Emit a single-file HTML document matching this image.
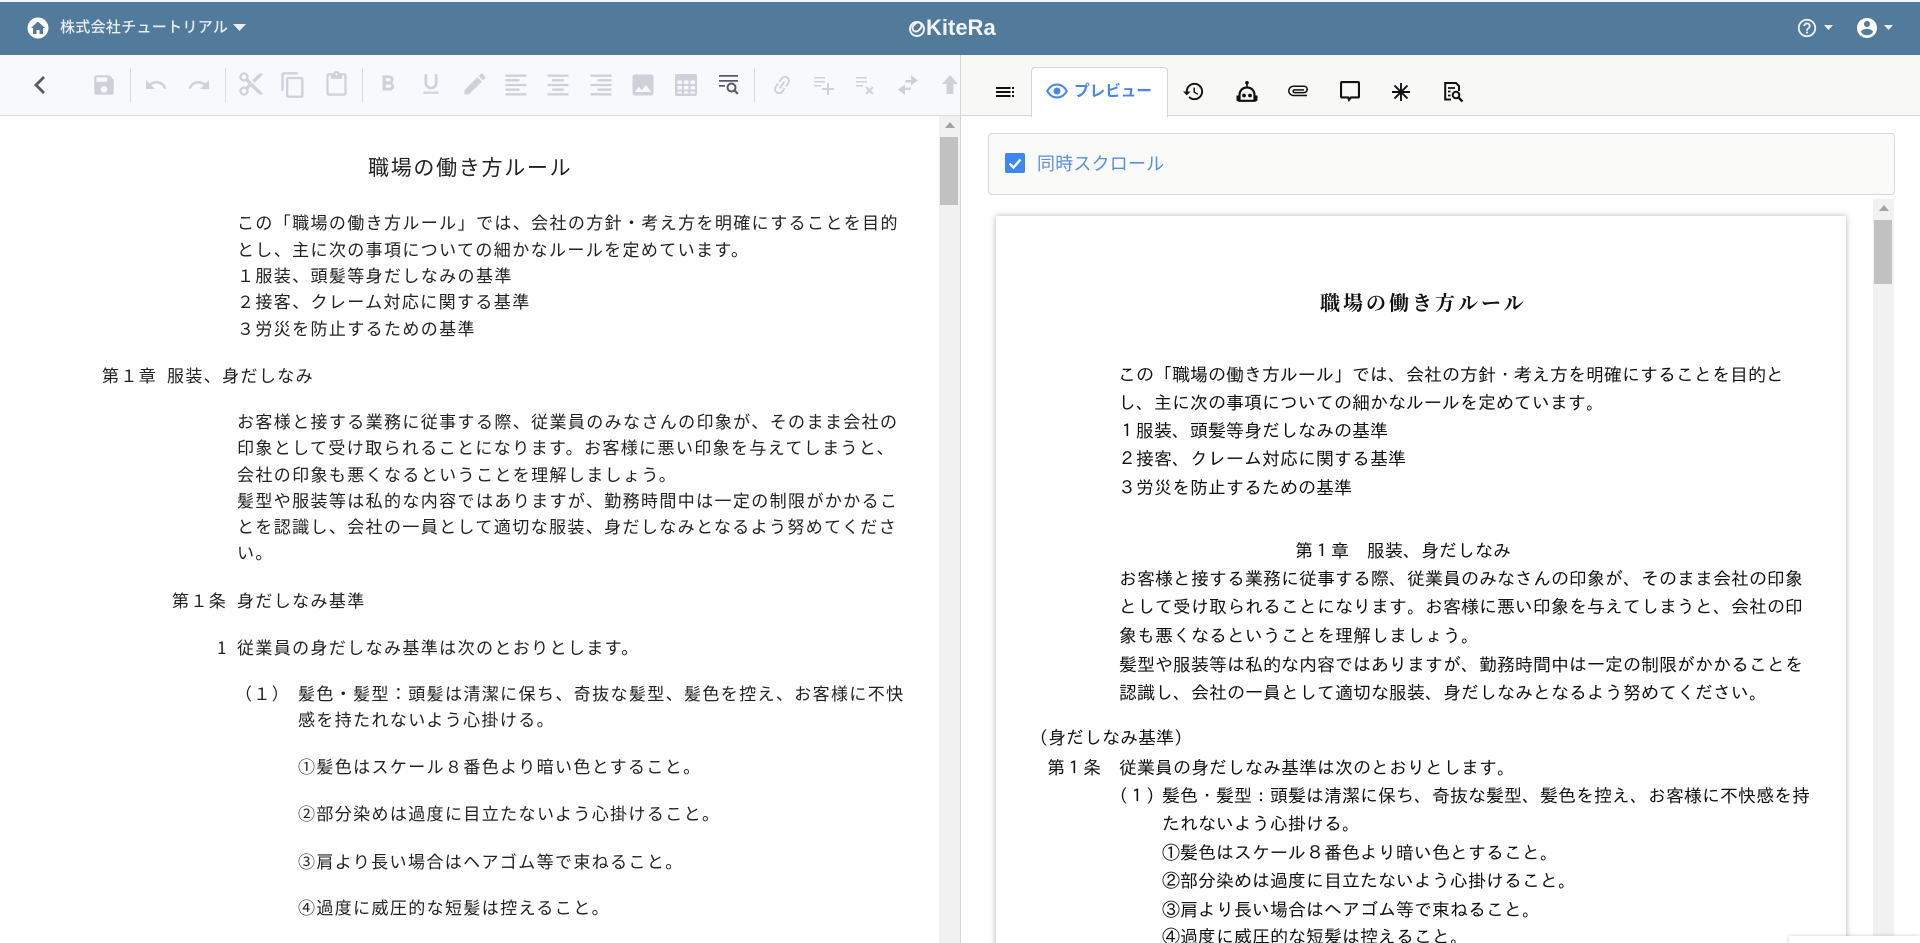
<!DOCTYPE html>
<html lang="ja"><head><meta charset="utf-8"><title>KiteRa</title>
<style>
html,body{margin:0;padding:0;width:1920px;height:943px;overflow:hidden;background:#fff}
body{position:relative;font-family:"Liberation Sans","Noto Sans CJK JP",sans-serif}
div,span,svg{position:absolute}
svg{display:block}
.l,.r{white-space:nowrap;line-height:20px;height:20px}
.l{font-family:"Noto Sans CJK JP",sans-serif;font-size:17px;letter-spacing:1.380px;color:#222;font-weight:400}
.r{font-family:"IPAGothic","Noto Sans CJK JP",sans-serif;font-size:18px;color:#111;line-height:22px;height:22px}
.g{fill:#ced1d9}
.k{fill:#111}
</style></head><body>
<!-- header -->
<div style="left:0;top:0;width:1920px;height:2px;background:#f4f6f8"></div>
<div style="left:0;top:2px;width:1920px;height:53px;background:#527a9b"></div>
<svg style="left:27px;top:17px" width="22" height="22" viewBox="0 0 22 22"><circle cx="11" cy="11" r="10.500" fill="#fff"/><path d="M11 4.500L4 11h2v6h3.500v-4h3v4H16v-6h2z" fill="#527a9b"/></svg>
<span style="left:60px;top:17px;line-height:20px;font-size:15px;letter-spacing:.3px;color:#e8eef3;white-space:nowrap;font-weight:500;font-family:'Noto Sans CJK JP',sans-serif">株式会社チュートリアル</span>
<svg style="left:233px;top:24px" width="13" height="8" viewBox="0 0 13 8"><path d="M0 0h13L6.500 7z" fill="#e8eef3"/></svg>
<svg style="left:908px;top:20px" width="18" height="18" viewBox="0 0 18 18" fill="none" stroke="#f2f5f8" stroke-width="1.900"><circle cx="9" cy="9" r="7"/><rect x="4" y="3.500" width="10" height="7" rx="3.500" transform="rotate(-45 9 7)"/></svg>
<span style="left:926px;top:15px;font-size:22px;line-height:26px;font-weight:700;color:#f2f5f8;white-space:nowrap">KiteRa</span>
<svg style="left:1796px;top:17px" width="22" height="22" viewBox="0 0 24 24"><path fill="#eef2f5" d="M11 18h2v-2h-2v2zm1-16C6.480 2 2 6.480 2 12s4.480 10 10 10 10-4.480 10-10S17.520 2 12 2zm0 18c-4.410 0-8-3.590-8-8s3.590-8 8-8 8 3.590 8 8-3.590 8-8 8zm0-14c-2.210 0-4 1.790-4 4h2c0-1.100.9-2 2-2s2 .9 2 2c0 2-3 1.750-3 5h2c0-2.250 3-2.500 3-5 0-2.210-1.790-4-4-4z"/></svg>
<svg style="left:1824px;top:25px" width="9" height="6" viewBox="0 0 9 6"><path d="M0 0h9L4.500 5z" fill="#eef2f5"/></svg>
<svg style="left:1855px;top:16px" width="24" height="24" viewBox="0 0 24 24"><path fill="#fff" d="M12 2C6.480 2 2 6.480 2 12s4.480 10 10 10 10-4.480 10-10S17.520 2 12 2zm0 3c1.660 0 3 1.340 3 3s-1.340 3-3 3-3-1.340-3-3 1.340-3 3-3zm0 14.200c-2.500 0-4.710-1.280-6-3.220.03-1.990 4-3.080 6-3.080 1.990 0 5.970 1.090 6 3.080-1.290 1.940-3.500 3.220-6 3.220z"/></svg>
<svg style="left:1884px;top:25px" width="9" height="6" viewBox="0 0 9 6"><path d="M0 0h9L4.500 5z" fill="#eef2f5"/></svg>

<!-- left toolbar -->
<div style="left:0;top:55px;width:960px;height:60px;background:#f8f9fc"></div>
<div style="left:0;top:115px;width:960px;height:1px;background:#d8dae2"></div>
<div style="left:130px;top:68px;width:1px;height:34px;background:#d8dae0"></div>
<div style="left:225px;top:68px;width:1px;height:34px;background:#d8dae0"></div>
<div style="left:362px;top:68px;width:1px;height:34px;background:#d8dae0"></div>
<div style="left:754px;top:68px;width:1px;height:34px;background:#d8dae0"></div>
<svg style="left:33px;top:75px" width="13" height="20" viewBox="0 0 13 20"><path d="M11 2L3 10l8 8" fill="none" stroke="#555a66" stroke-width="2.800"/></svg>
<svg style="left:91px;top:72px" width="26" height="26" viewBox="0 0 24 24"><path class="g" d="M17 3H5c-1.110 0-2 .9-2 2v14c0 1.100.89 2 2 2h14c1.100 0 2-.9 2-2V7l-4-4zm-5 16c-1.660 0-3-1.340-3-3s1.340-3 3-3 3 1.340 3 3-1.340 3-3 3zm3-10H5V5h10v4z"/></svg>
<svg style="left:144px;top:73px" width="24" height="24" viewBox="0 0 24 24"><path class="g" d="M12.500 8c-2.650 0-5.050.99-6.900 2.600L2 7v9h9l-3.620-3.620c1.390-1.160 3.160-1.880 5.120-1.880 3.540 0 6.550 2.310 7.600 5.500l2.370-.78C21.080 11.030 17.150 8 12.500 8z"/></svg>
<svg style="left:187px;top:73px" width="24" height="24" viewBox="0 0 24 24"><path class="g" d="M18.400 10.600C16.550 8.990 14.150 8 11.500 8c-4.650 0-8.580 3.030-9.960 7.220L3.900 16c1.050-3.190 4.050-5.500 7.600-5.500 1.950 0 3.730.72 5.120 1.880L13 16h9V7l-3.600 3.600z"/></svg>
<svg style="left:237px;top:70px" width="28" height="28" viewBox="0 0 24 24"><path class="g" d="M9.640 7.640c.23-.5.36-1.050.36-1.640 0-2.210-1.790-4-4-4S2 3.790 2 6s1.790 4 4 4c.59 0 1.140-.13 1.640-.36L10 12l-2.360 2.360C7.140 14.130 6.590 14 6 14c-2.210 0-4 1.790-4 4s1.790 4 4 4 4-1.790 4-4c0-.59-.13-1.140-.36-1.640L12 14l7 7h3v-1L9.640 7.640zM6 8c-1.100 0-2-.89-2-2s.9-2 2-2 2 .89 2 2-.9 2-2 2zm0 12c-1.100 0-2-.89-2-2s.9-2 2-2 2 .89 2 2-.9 2-2 2zm6-7.500c-.28 0-.5-.22-.5-.5s.22-.5.5-.5.5.22.5.5-.22.5-.5.5zM19 3l-6 6 2 2 7-7V3z"/></svg>
<svg style="left:279px;top:71px" width="28" height="28" viewBox="0 0 24 24"><path class="g" d="M16 1H4c-1.100 0-2 .9-2 2v14h2V3h12V1zm3 4H8c-1.100 0-2 .9-2 2v14c0 1.100.9 2 2 2h11c1.100 0 2-.9 2-2V7c0-1.100-.9-2-2-2zm0 16H8V7h11v14z"/></svg>
<svg style="left:323px;top:71px" width="27" height="27" viewBox="0 0 24 24"><path class="g" d="M19 2h-4.180C14.400.84 13.300 0 12 0c-1.300 0-2.400.84-2.820 2H5c-1.100 0-2 .9-2 2v16c0 1.100.9 2 2 2h14c1.100 0 2-.9 2-2V4c0-1.100-.9-2-2-2zm-7 0c.55 0 1 .45 1 1s-.45 1-1 1-1-.45-1-1 .45-1 1-1zm7 18H5V4h2v3h10V4h2v16z"/></svg>
<svg style="left:375px;top:71px" width="26" height="26" viewBox="0 0 24 24"><path class="g" d="M15.600 10.790c.97-.67 1.650-1.770 1.650-2.790 0-2.260-1.750-4-4-4H7v14h7.040c2.090 0 3.710-1.700 3.710-3.790 0-1.520-.86-2.820-2.150-3.420zM10 6.500h3c.83 0 1.500.67 1.500 1.500s-.67 1.500-1.500 1.500h-3v-3zm3.500 9H10v-3h3.500c.83 0 1.500.67 1.500 1.500s-.67 1.500-1.500 1.500z"/></svg>
<svg style="left:418px;top:71px" width="26" height="26" viewBox="0 0 24 24"><path class="g" d="M12 17c3.310 0 6-2.690 6-6V3h-2.500v8c0 1.930-1.570 3.500-3.500 3.500S8.500 12.930 8.500 11V3H6v8c0 3.310 2.690 6 6 6zm-7 2v2h14v-2H5z"/></svg>
<svg style="left:461px;top:70px" width="28" height="28" viewBox="0 0 24 24"><path class="g" d="M3 17.250V21h3.750L17.810 9.940l-3.750-3.750L3 17.250zM20.710 7.040c.39-.39.39-1.020 0-1.410l-2.340-2.340c-.39-.39-1.020-.39-1.410 0l-1.830 1.830 3.750 3.750 1.830-1.830z"/></svg>
<svg style="left:502px;top:71px" width="28" height="28" viewBox="0 0 24 24"><path class="g" d="M15 15H3v2h12v-2zm0-8H3v2h12V7zM3 13h18v-2H3v2zm0 8h18v-2H3v2zM3 3v2h18V3H3z"/></svg>
<svg style="left:544px;top:71px" width="28" height="28" viewBox="0 0 24 24"><path class="g" d="M7 15v2h10v-2H7zm-4 6h18v-2H3v2zm0-8h18v-2H3v2zm4-6v2h10V7H7zM3 3v2h18V3H3z"/></svg>
<svg style="left:587px;top:71px" width="28" height="28" viewBox="0 0 24 24"><path class="g" d="M3 21h18v-2H3v2zm6-4h12v-2H9v2zm-6-4h18v-2H3v2zm6-4h12V7H9v2zM3 3v2h18V3H3z"/></svg>
<svg style="left:629px;top:71px" width="28" height="28" viewBox="0 0 24 24"><path class="g" d="M21 19V5c0-1.100-.9-2-2-2H5c-1.100 0-2 .9-2 2v14c0 1.100.9 2 2 2h14c1.100 0 2-.9 2-2zM8.500 13.500l2.500 3.010L14.500 12l4.500 6H5l3.500-4.500z"/></svg>
<svg style="left:675px;top:74px" width="22" height="22" viewBox="0 0 22 22"><path class="g" fill-rule="evenodd" d="M2 0h18a2 2 0 0 1 2 2v18a2 2 0 0 1-2 2H2a2 2 0 0 1-2-2V2a2 2 0 0 1 2-2zM2.500 6.500v3.500h4.500V6.500zm6.500 0v3.500h4.500V6.500zm6.500 0v3.500h4.500V6.500zM2.500 12v3.500h4.500V12zm6.500 0v3.500h4.500V12zm6.500 0v3.500h4.500V12zM2.500 17.500v2h4.500v-2zm6.500 0v2h4.500v-2zm6.500 0v2h4.500v-2z"/></svg>
<svg style="left:718px;top:74px" width="22" height="22" viewBox="0 0 22 22" fill="#555a66"><path d="M1 1h19v1.800H1zM1 6h19v1.800H1zM1 11h6v1.800H1z"/><circle cx="13.500" cy="13.500" r="4" fill="none" stroke="#555a66" stroke-width="2"/><path d="M16 16l3.800 3.800" stroke="#555a66" stroke-width="2.200"/></svg>
<svg style="left:770px;top:73px" width="24" height="24" viewBox="0 0 24 24"><g transform="rotate(-55 12 12)"><path class="g" d="M3.900 12c0-1.710 1.390-3.100 3.100-3.100h4V7H7c-2.760 0-5 2.240-5 5s2.240 5 5 5h4v-1.900H7c-1.710 0-3.100-1.390-3.100-3.100zM8 13h8v-2H8v2zm9-6h-4v1.900h4c1.710 0 3.100 1.390 3.100 3.100s-1.390 3.100-3.100 3.100h-4V17h4c2.760 0 5-2.240 5-5s-2.240-5-5-5z"/></g></svg>
<svg style="left:813px;top:75px" width="22" height="20" viewBox="0 0 22 20"><path class="g" d="M1 2h11v1.500H1zM1 6h11v1.500H1zM1 10h7v1.500H1zM14 8h2v5h5v2h-5v5h-2v-5H9v-2h5z"/></svg>
<svg style="left:855px;top:75px" width="20" height="20" viewBox="0 0 20 20"><path class="g" d="M1 2h11v1.500H1zM1 6h11v1.500H1zM1 10h7v1.500H1z"/><path d="M11 12l7 7M18 12l-7 7" stroke="#ced1d9" stroke-width="2"/></svg>
<svg style="left:897px;top:74px" width="22" height="22" viewBox="0 0 22 22"><path class="g" d="M14 1l7 5.500-7 5V8.500H7.500L9 6h5zM8 21l-7-5.500 7-5v3h6.500L13 16H8z"/></svg>
<svg style="left:941px;top:74px" width="18" height="22" viewBox="0 0 18 22"><path class="g" d="M9 1l8 9h-4.500v10h-7V10H1z"/></svg>

<!-- left content -->
<div style="left:939px;top:116px;width:21px;height:827px;background:#f1f1f1"></div>
<svg style="left:945px;top:122px" width="10" height="6" viewBox="0 0 10 6"><path d="M5 0l5 6H0z" fill="#a3a3a3"/></svg>
<div style="left:940px;top:137px;width:18px;height:68px;background:#c1c1c1"></div>
<span class="l" style="left:368px;top:156px;font-size:21px;letter-spacing:1.700px;line-height:22px;height:22px">職場の働き方ルール</span>
<span class="l" style="left:237px;top:212px">この「職場の働き方ルール」では、会社の方針・考え方を明確にすることを目的</span>
<span class="l" style="left:237px;top:239px">とし、主に次の事項についての細かなルールを定めています。</span>
<span class="l" style="left:237px;top:265px">１服装、頭髪等身だしなみの基準</span>
<span class="l" style="left:237px;top:291px">２接客、クレーム対応に関する基準</span>
<span class="l" style="left:237px;top:318px">３労災を防止するための基準</span>
<span class="l" style="left:102px;top:365px">第１章</span>
<span class="l" style="left:167px;top:365px">服装、身だしなみ</span>
<span class="l" style="left:237px;top:411px">お客様と接する業務に従事する際、従業員のみなさんの印象が、そのまま会社の</span>
<span class="l" style="left:237px;top:437px">印象として受け取られることになります。お客様に悪い印象を与えてしまうと、</span>
<span class="l" style="left:237px;top:464px">会社の印象も悪くなるということを理解しましょう。</span>
<span class="l" style="left:237px;top:490px">髪型や服装等は私的な内容ではありますが、勤務時間中は一定の制限がかかるこ</span>
<span class="l" style="left:237px;top:516px">とを認識し、会社の一員として適切な服装、身だしなみとなるよう努めてくださ</span>
<span class="l" style="left:237px;top:542px">い。</span>
<span class="l" style="left:172px;top:590px">第１条</span>
<span class="l" style="left:237px;top:590px">身だしなみ基準</span>
<span class="l" style="left:217px;top:637px">1</span>
<span class="l" style="left:237px;top:637px">従業員の身だしなみ基準は次のとおりとします。</span>
<span class="l" style="left:235px;top:683px">（１）</span>
<span class="l" style="left:298px;top:683px">髪色・髪型：頭髪は清潔に保ち、奇抜な髪型、髪色を控え、お客様に不快</span>
<span class="l" style="left:298px;top:709px">感を持たれないよう心掛ける。</span>
<span class="l" style="left:298px;top:756px">①髪色はスケール８番色より暗い色とすること。</span>
<span class="l" style="left:298px;top:803px">②部分染めは過度に目立たないよう心掛けること。</span>
<span class="l" style="left:298px;top:851px">③肩より長い場合はヘアゴム等で束ねること。</span>
<span class="l" style="left:298px;top:897px">④過度に威圧的な短髪は控えること。</span>

<!-- divider -->
<div style="left:960px;top:55px;width:1px;height:888px;background:#d4d4d4"></div>

<!-- right tab bar -->
<div style="left:961px;top:55px;width:959px;height:60px;background:#f8f8f6"></div>
<div style="left:961px;top:115px;width:959px;height:1px;background:#d6d6d6"></div>
<div style="left:1031px;top:67px;width:135px;height:49px;background:#fff;border:1px solid #d6d6d6;border-bottom:none;border-radius:4px 4px 0 0"></div>
<svg style="left:996px;top:87px" width="18" height="10" viewBox="0 0 18 10"><path class="k" d="M0 0h14.500v2H0zM0 4h14.500v2H0zM0 8h14.500v2H0zM16 0H18v2h-2zM16 4H18v2h-2zM16 8H18v2h-2z"/></svg>
<svg style="left:1046px;top:81px" width="22" height="20" viewBox="0 0 22 20"><path d="M1.200 10C3.800 5.500 7.200 3.500 11 3.500S18.200 5.500 20.800 10C18.200 14.500 14.800 16.500 11 16.500S3.800 14.500 1.200 10z" fill="none" stroke="#4a86e8" stroke-width="2"/><circle cx="11" cy="10" r="3.500" fill="#4a86e8"/></svg>
<span style="left:1074px;top:80px;font-size:15.600px;line-height:20px;font-weight:700;color:#4a86e8;white-space:nowrap;font-family:'Noto Sans CJK JP',sans-serif">プレビュー</span>
<svg style="left:1182px;top:80px" width="23" height="23" viewBox="0 0 24 24"><path class="k" d="M13 3c-4.970 0-9 4.030-9 9H1l3.890 3.890.07.14L9 12H6c0-3.870 3.130-7 7-7s7 3.130 7 7-3.130 7-7 7c-1.930 0-3.680-.79-4.940-2.060l-1.420 1.420C8.270 19.990 10.510 21 13 21c4.970 0 9-4.030 9-9s-4.030-9-9-9zm-1 5v5l4.280 2.540.72-1.210-3.500-2.080V8H12z"/></svg>
<svg style="left:1236px;top:81px" width="22" height="21" viewBox="0 0 22 21"><circle cx="11" cy="1.800" r="1.800" fill="#111"/><path d="M10.200 2h1.600v5h-1.600z" fill="#111"/><path d="M3.500 14.500C3.500 9.500 6.500 6.500 11 6.500S18.500 9.500 18.500 14.500V19.800H3.500Z" fill="none" stroke="#111" stroke-width="2.200"/><path d="M.5 14.500h3v5.800h-1.500a1.500 1.500 0 0 1-1.500-1.500zM18.500 14.500h3v4.300a1.500 1.500 0 0 1-1.500 1.500h-1.500z" fill="#111"/><circle cx="8" cy="14.500" r="1.900" fill="#111"/><circle cx="14" cy="14.500" r="1.900" fill="#111"/></svg>
<svg style="left:1287px;top:85px" width="22" height="13" viewBox="0 0 22 13" fill="none" stroke="#111" stroke-width="1.500"><path d="M20 10.500H6.500a4.600 4.600 0 0 1 0-9.300h10.500a3.200 3.200 0 0 1 0 6.400H7.500a1.300 1.300 0 0 1 0-2.700H17"/></svg>
<svg style="left:1340px;top:81px" width="20" height="21" viewBox="0 0 20 21"><path fill="#111" fill-rule="evenodd" d="M2 0h16a2 2 0 0 1 2 2v13.500a2 2 0 0 1-2 2h-6.500L8.500 21l-1-3.500H2a2 2 0 0 1-2-2V2a2 2 0 0 1 2-2zm.1 2.100v13.300h7l.3 1.200 1.200-1.200h7.300V2.100z"/></svg>
<svg style="left:1392px;top:83px" width="18" height="18" viewBox="0 0 18 18"><path d="M9 0v18M0 9h18M2.500 2.500l13 13M15.500 2.500l-13 13" stroke="#111" stroke-width="1.900"/></svg>
<svg style="left:1444px;top:82px" width="20" height="21" viewBox="0 0 20 21" fill="none" stroke="#111" stroke-width="2"><path d="M7 17.500H1.200V1H12l3 3v5"/><path d="M4 6h7M4 9.500h2.500M4 13.500h2.500" stroke-width="1.700"/><circle cx="12" cy="13" r="3.300"/><path d="M14.500 15.500l4 4" stroke-width="2.300"/></svg>

<!-- sync scroll -->
<div style="left:988px;top:133px;width:905px;height:60px;background:#fafaf9;border:1px solid #d7d7d7;border-radius:4px"></div>
<svg style="left:1005px;top:153px" width="20" height="20" viewBox="0 0 20 20"><rect width="20" height="20" rx="2" fill="#3d87f0"/><path d="M4.500 10.500l4 4 7-8" fill="none" stroke="#fff" stroke-width="2.400"/></svg>
<span style="left:1037px;top:152px;font-size:18px;letter-spacing:.2px;line-height:22px;color:#5a8ee0;white-space:nowrap;font-family:'Noto Sans CJK JP',sans-serif">同時スクロール</span>

<!-- right scrollbar -->
<div style="left:1873px;top:199px;width:21px;height:744px;background:#f1f1f1"></div>
<svg style="left:1879px;top:205px" width="10" height="6" viewBox="0 0 10 6"><path d="M5 0l5 6H0z" fill="#a3a3a3"/></svg>
<div style="left:1874px;top:220px;width:18px;height:64px;background:#c1c1c1"></div>

<!-- card -->
<div style="left:996px;top:216px;width:850px;height:740px;background:#fff;box-shadow:0 0 6px rgba(0,0,0,.3)"></div>
<span class="r" style="left:1320px;top:291px;font-size:20px;font-weight:700;letter-spacing:3px;font-family:'Noto Serif CJK SC','Noto Sans CJK JP',sans-serif">職場の働き方ルール</span>
<span class="r" style="left:1118px;top:364px">この「職場の働き方ルール」では、会社の方針・考え方を明確にすることを目的と</span>
<span class="r" style="left:1118px;top:392px">し、主に次の事項についての細かなルールを定めています。</span>
<span class="r" style="left:1118px;top:420px">１服装、頭髪等身だしなみの基準</span>
<span class="r" style="left:1118px;top:448px">２接客、クレーム対応に関する基準</span>
<span class="r" style="left:1118px;top:477px">３労災を防止するための基準</span>
<span class="r" style="left:1295px;top:540px">第１章　服装、身だしなみ</span>
<span class="r" style="left:1119px;top:568px">お客様と接する業務に従事する際、従業員のみなさんの印象が、そのまま会社の印象</span>
<span class="r" style="left:1119px;top:596px">として受け取られることになります。お客様に悪い印象を与えてしまうと、会社の印</span>
<span class="r" style="left:1119px;top:625px">象も悪くなるということを理解しましょう。</span>
<span class="r" style="left:1119px;top:654px">髪型や服装等は私的な内容ではありますが、勤務時間中は一定の制限がかかることを</span>
<span class="r" style="left:1119px;top:682px">認識し、会社の一員として適切な服装、身だしなみとなるよう努めてください。</span>
<span class="r" style="left:1030px;top:727px">（身だしなみ基準）</span>
<span class="r" style="left:1047px;top:757px">第１条</span>
<span class="r" style="left:1119px;top:757px">従業員の身だしなみ基準は次のとおりとします。</span>
<span class="r" style="left:1110px;top:785px">（１）</span>
<span class="r" style="left:1162px;top:785px">髪色・髪型：頭髪は清潔に保ち、奇抜な髪型、髪色を控え、お客様に不快感を持</span>
<span class="r" style="left:1162px;top:813px">たれないよう心掛ける。</span>
<span class="r" style="left:1162px;top:842px">①髪色はスケール８番色より暗い色とすること。</span>
<span class="r" style="left:1162px;top:870px">②部分染めは過度に目立たないよう心掛けること。</span>
<span class="r" style="left:1162px;top:899px">③肩より長い場合はヘアゴム等で束ねること。</span>
<span class="r" style="left:1162px;top:926px">④過度に威圧的な短髪は控えること。</span>
<div style="left:1789px;top:936px;width:131px;height:7px;background:#fff;box-shadow:0 0 4px rgba(0,0,0,.2)"></div>
</body></html>
